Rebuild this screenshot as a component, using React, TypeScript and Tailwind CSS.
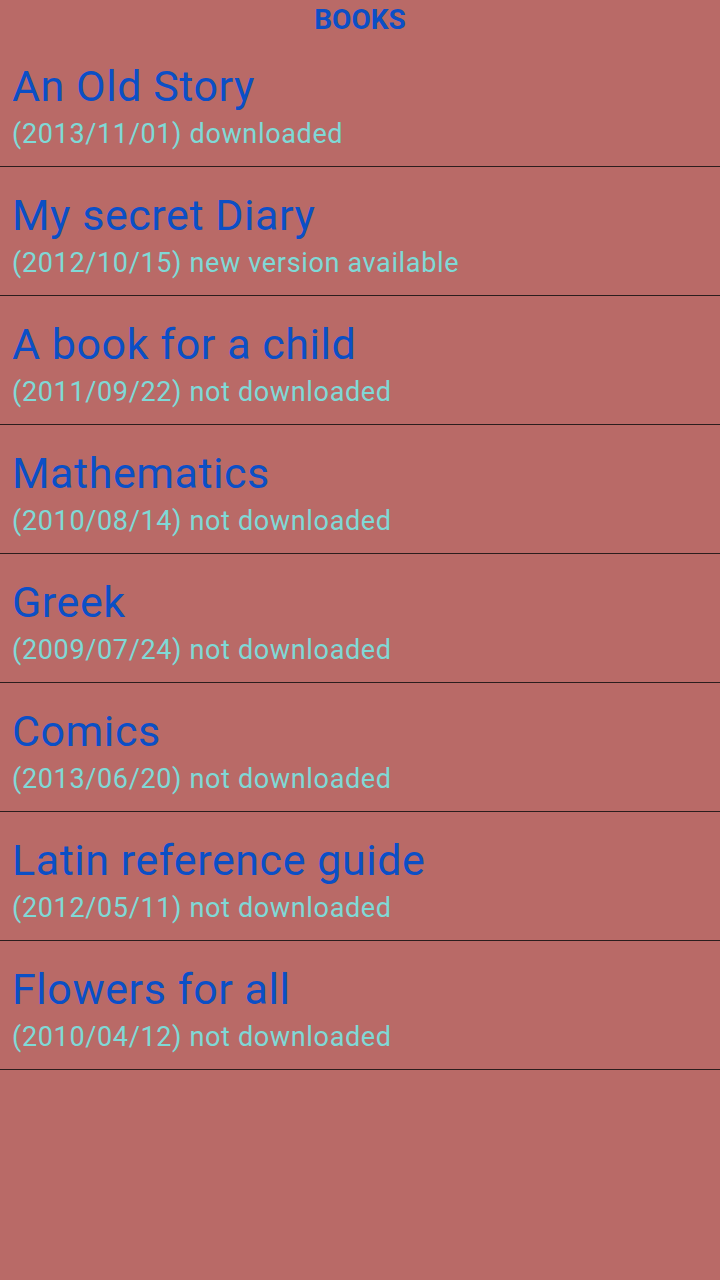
const books = [
  { title: 'An Old Story', date: '2013/11/01', status: 'downloaded' },
  { title: 'My secret Diary', date: '2012/10/15', status: 'new version available' },
  { title: 'A book for a child', date: '2011/09/22', status: 'not downloaded' },
  { title: 'Mathematics', date: '2010/08/14', status: 'not downloaded' },
  { title: 'Greek', date: '2009/07/24', status: 'not downloaded' },
  { title: 'Comics', date: '2013/06/20', status: 'not downloaded' },
  { title: 'Latin reference guide', date: '2012/05/11', status: 'not downloaded' },
  { title: 'Flowers for all', date: '2010/04/12', status: 'not downloaded' },
];

export default function App() {
  return (
    <div className="min-h-[1280px] w-full bg-[#b96a67] font-['Roboto',sans-serif]">
      {/* Header */}
      <div className="h-[38px] pt-[4px] flex justify-center">
        <h1 className="text-[28px] leading-[32px] font-bold text-[#0b4fc6]">BOOKS</h1>
      </div>

      {/* Book list */}
      <ul>
        {books.map((book) => (
          <li key={book.title} className="h-[129px] border-b border-[#2b1d1d] px-3 pt-[23px]">
            <div className="text-[43px] leading-[50px] tracking-[0.55px] text-[#0b4fc6]">{book.title}</div>
            <div className="mt-[7px] text-[27px] leading-[32px] tracking-[0.65px] text-[#7fd9d6]">
              ({book.date}) {book.status}
            </div>
          </li>
        ))}
      </ul>
    </div>
  );
}
